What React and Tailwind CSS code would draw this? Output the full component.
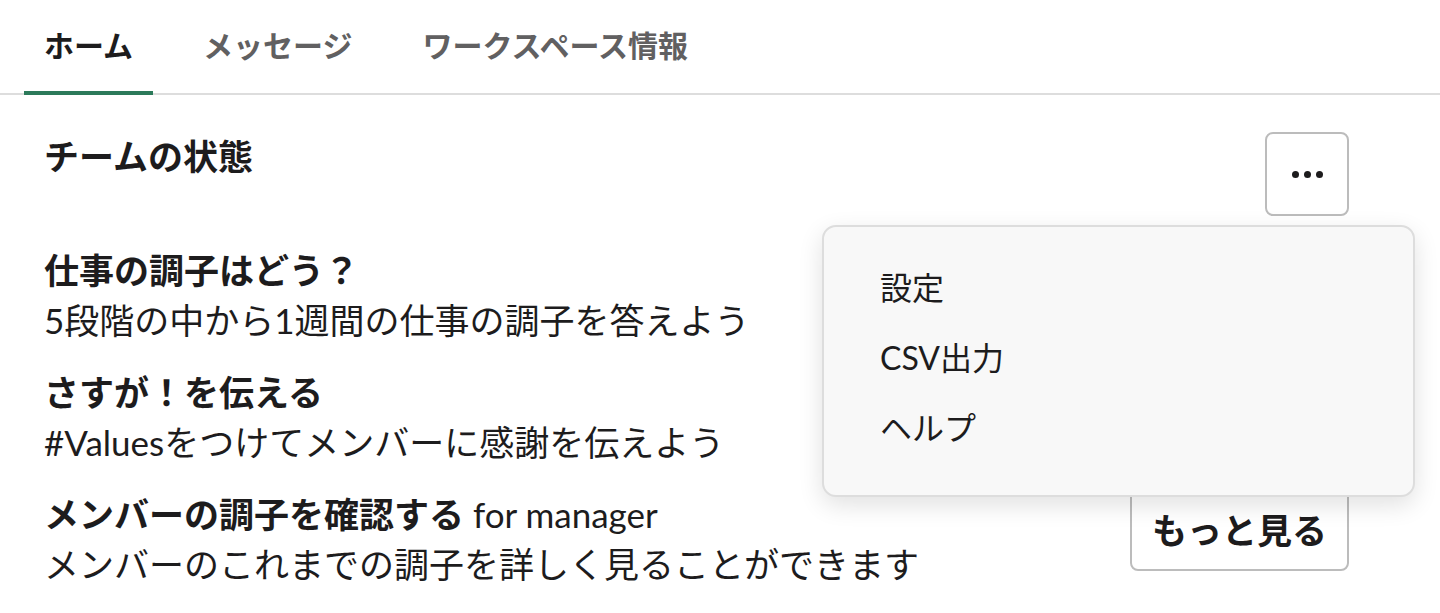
import React from 'react';

const font = { fontFamily: 'Lato, "Noto Sans CJK JP", sans-serif' };

const tabs = ['ホーム', 'メッセージ', 'ワークスペース情報'];

const sections = [
  { title: '仕事の調子はどう？', desc: '5段階の中から1週間の仕事の調子を答えよう' },
  { title: 'さすが！を伝える', desc: '#Valuesをつけてメンバーに感謝を伝えよう' },
  { title: 'メンバーの調子を確認する', sub: 'for manager', desc: 'メンバーのこれまでの調子を詳しく見ることができます', button: 'もっと見る' },
];

const App = () => {
  return (
    <div className="relative h-[613px] w-[1440px] overflow-hidden bg-white text-[#1d1c1d]" style={font}>
      {/* Tabs */}
      <div className="flex h-[95px] gap-[30px] border-b-2 border-[#dddddd] pl-[24px]">
        {tabs.map((tab, i) => (
          <div
            key={tab}
            className={
              i === 0
                ? 'h-[95px] border-b-4 border-[#2c7a5a] px-[20px] pt-[25px] text-[30px] font-bold leading-[40px] text-[#1d1c1d]'
                : 'h-[95px] px-[20px] pt-[25px] text-[30px] font-bold leading-[40px] text-[#616061]'
            }
          >
            {tab}
          </div>
        ))}
      </div>

      <div className="pl-[44px] pr-[91px]">
        {/* Header */}
        <div className="mt-[37px] flex items-start justify-between">
          <h2 className="text-[35px] font-bold leading-[48px]">チームの状態</h2>
          <button className="flex h-[84px] w-[84px] items-center justify-center rounded-[8px] border-2 border-[#bcbcbc] bg-white">
            <span className="flex gap-[5px]">
              <span className="h-[7px] w-[7px] rounded-full bg-[#1d1c1d]" />
              <span className="h-[7px] w-[7px] rounded-full bg-[#1d1c1d]" />
              <span className="h-[7px] w-[7px] rounded-full bg-[#1d1c1d]" />
            </span>
          </button>
        </div>

        {/* Sections */}
        <div className="mt-[29px] flex flex-col gap-[22px]">
          {sections.map((s) => (
            <div key={s.title} className="flex items-start justify-between">
              <div>
                <div className="text-[35px] leading-[50px]">
                  <span className="font-bold">{s.title}</span>
                  {s.sub && <span> {s.sub}</span>}
                </div>
                <div className="text-[35px] leading-[50px]">{s.desc}</div>
              </div>
              {s.button && (
                <button className="h-[82px] rounded-[8px] border-2 border-[#bcbcbc] bg-white px-[20px] text-[35px] font-bold">
                  {s.button}
                </button>
              )}
            </div>
          ))}
        </div>
      </div>

      {/* Dropdown menu */}
      <div className="absolute left-[822px] top-[225px] h-[272px] w-[593px] rounded-[14px] border-2 border-[#dddddd] bg-[#f8f8f8] pt-[26px] shadow-[0_8px_24px_rgba(0,0,0,0.12)]">
        {['設定', 'CSV出力', 'ヘルプ'].map((item) => (
          <div key={item} className="pl-[56px] text-[32px] leading-[70px]">
            {item}
          </div>
        ))}
      </div>
    </div>
  );
};

export default App;
